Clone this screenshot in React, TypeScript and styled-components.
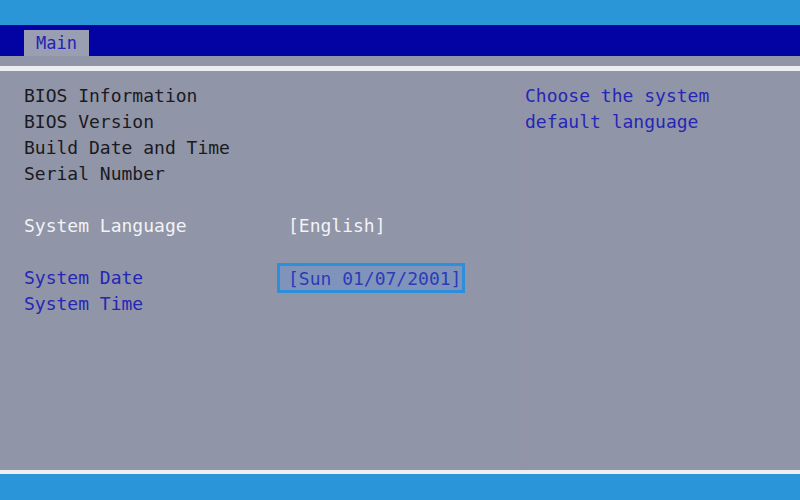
import styled, { createGlobalStyle } from 'styled-components'

const GlobalStyle = createGlobalStyle`
  html, body {
    margin: 0;
    padding: 0;
    background: #9195a8;
  }
  * { box-sizing: border-box; }
`

const Screen = styled.div`
  width: 800px;
  height: 500px;
  display: flex;
  flex-direction: column;
  font-family: 'DejaVu Sans Mono', 'Liberation Mono', monospace;
  font-size: 18px;
  background: #9195a8;
  overflow: hidden;
`

const TopBar = styled.div`
  height: 25px;
  background: #2b96d7;
`

const TabStrip = styled.div`
  height: 31px;
  background: #0303a3;
  display: flex;
  align-items: flex-end;
  padding-left: 24px;
`

const Tab = styled.div`
  height: 26px;
  width: 65px;
  background: #9a9eb2;
  color: #2323b4;
  display: flex;
  align-items: center;
  justify-content: center;
  font-size: 17px;
`

const Gap = styled.div`
  height: 10px;
  background: #9195a8;
`

const Rule = styled.div<{ $h: number }>`
  height: ${p => p.$h}px;
  background: #eceef2;
`

const Body = styled.div`
  flex: 1;
  display: flex;
  background: #9195a8;
`

const Left = styled.div`
  width: 523px;
  padding: 12px 0 0 24px;
  border-right: 1px solid #968fa6;
  display: grid;
  grid-template-columns: 264px 1fr;
  grid-auto-rows: 26px;
  align-content: start;
`

const Right = styled.div`
  flex: 1;
  padding: 12px 0 0 2px;
  color: #2626b6;
  line-height: 26px;
`

const Cell = styled.div<{ $tone?: 'dark' | 'light' | 'blue' }>`
  line-height: 26px;
  white-space: pre;
  color: ${p => (p.$tone === 'light' ? '#f2f3f6' : p.$tone === 'blue' ? '#2626b6' : '#1a1a22')};
`

const Spacer = styled.div`
  grid-column: 1 / -1;
`

const Selected = styled.div`
  margin-left: -11px;
  width: 188px;
  height: 30px;
  margin-top: -2px;
  border: 3px solid #2b8fdb;
  background: #8094bb;
  color: #2a3cb8;
  display: flex;
  align-items: center;
  padding-left: 8px;
  white-space: pre;
`

const BottomBar = styled.div`
  height: 26px;
  background: #2a95d8;
`

export default function App() {
  return (
    <>
      <GlobalStyle />
      <Screen>
        <TopBar />
        <TabStrip>
          <Tab>Main</Tab>
        </TabStrip>
        <Gap />
        <Rule $h={5} />
        <Body>
          <Left>
            <Cell>BIOS Information</Cell>
            <Cell />
            <Cell>BIOS Version</Cell>
            <Cell />
            <Cell>Build Date and Time</Cell>
            <Cell />
            <Cell>Serial Number</Cell>
            <Cell />
            <Spacer />
            <Cell $tone="light">System Language</Cell>
            <Cell $tone="light">[English]</Cell>
            <Spacer />
            <Cell $tone="blue">System Date</Cell>
            <Selected>[Sun 01/07/2001]</Selected>
            <Cell $tone="blue">System Time</Cell>
            <Cell />
          </Left>
          <Right>
            Choose the system
            <br />
            default language
          </Right>
        </Body>
        <Rule $h={4} />
        <BottomBar />
      </Screen>
    </>
  )
}
